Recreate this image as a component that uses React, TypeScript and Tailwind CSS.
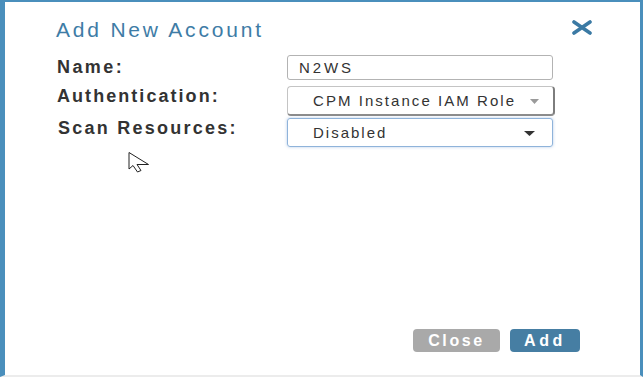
export default function App() {
	return (
		<div className="relative flex h-[377px] w-[643px] flex-col border-t-2 border-r-[3px] border-b-2 border-l-[5px] border-[#4a8fbc] border-b-[#ececec] bg-white font-['Liberation_Sans',Arial,sans-serif]">
			{/* Header */}
			<div className="flex items-start justify-between pt-4 pr-[47px] pl-[51px]">
				<h2 className="text-[21px] leading-6 tracking-[2.8px] text-[#3e7ca6]">
					Add New Account
				</h2>
				<svg
					width="22"
					height="15"
					viewBox="0 0 22 15"
					className="mt-[2px]"
					preserveAspectRatio="none"
				>
					<path
						d="M3 2 L19 13 M19 2 L3 13"
						stroke="#3b7aa4"
						strokeWidth="3.6"
						strokeLinecap="round"
					/>
				</svg>
			</div>

			{/* Form */}
			<div className="mt-[13px] flex flex-col pl-[51px]">
				<div className="flex items-start">
					<label className="w-[231px] pt-[2px] pl-[1px] text-[18px] leading-5 font-bold tracking-[2.4px] text-[#333]">
						Name:
					</label>
					<div className="flex h-[25px] w-[266px] items-center rounded-[3px] border border-[#b3b3b3] pt-[2px] pl-[11px] text-[15px] tracking-[2.9px] text-[#333]">
						N2WS
					</div>
				</div>

				<div className="mt-[6px] flex items-start">
					<label className="w-[231px] pl-[1px] text-[18px] leading-5 font-bold tracking-[2.05px] text-[#333]">
						Authentication:
					</label>
					<div className="flex h-[30px] w-[268px] items-center rounded-[4px] border border-r-2 border-b-2 border-[#c4c4c4] border-r-[#7d7d7d] border-b-[#8c8c8c] pt-[1px] pr-[14px] pl-[25px] text-[15px] tracking-[2.05px] text-[#333]">
						<span className="flex-1 whitespace-nowrap">CPM Instance IAM Role</span>
						<svg width="9" height="5" viewBox="0 0 9 5" className="ml-[2px]">
							<path d="M0 0 L9 0 L4.5 5 Z" fill="#9a9a9a" />
						</svg>
					</div>
				</div>

				<div className="mt-[2px] flex items-start">
					<label className="w-[231px] pl-[2px] text-[18px] leading-5 font-bold tracking-[2.25px] text-[#333]">
						Scan Resources:
					</label>
					<div className="flex h-[29px] w-[266px] items-center rounded-[3px] border border-[#8fb3da] pt-[1px] pr-[17px] pl-[25px] text-[15px] tracking-[2px] text-[#333] shadow-[0_0_3px_rgba(102,150,210,0.5)]">
						<span className="flex-1">Disabled</span>
						<svg width="11" height="5" viewBox="0 0 11 5">
							<path d="M0 0 L11 0 L5.5 5 Z" fill="#333" />
						</svg>
					</div>
				</div>
			</div>

			{/* Footer */}
			<div className="mt-auto flex justify-end gap-[10px] pr-[60px] pb-[23px]">
				<button className="flex h-[23px] w-[87px] items-center justify-center rounded-[4px] bg-[#a9a9a9] text-[16px] font-bold tracking-[2.6px] text-white">
					Close
				</button>
				<button className="flex h-[23px] w-[70px] items-center justify-center rounded-[4px] bg-[#467ea3] text-[16px] font-bold tracking-[3.6px] text-white">
					Add
				</button>
			</div>

			{/* Mouse pointer */}
			<svg
				width="22"
				height="22"
				viewBox="0 0 22 22"
				className="absolute top-[150px] left-[123px]"
			>
				<path
					d="M1 0.5 L1 17 L5 13.5 L9.5 20 L13 18.5 L9 12.5 L20.5 12.5 Z"
					fill="white"
					stroke="#222"
					strokeWidth="1"
					strokeLinejoin="round"
				/>
			</svg>
		</div>
	);
}
